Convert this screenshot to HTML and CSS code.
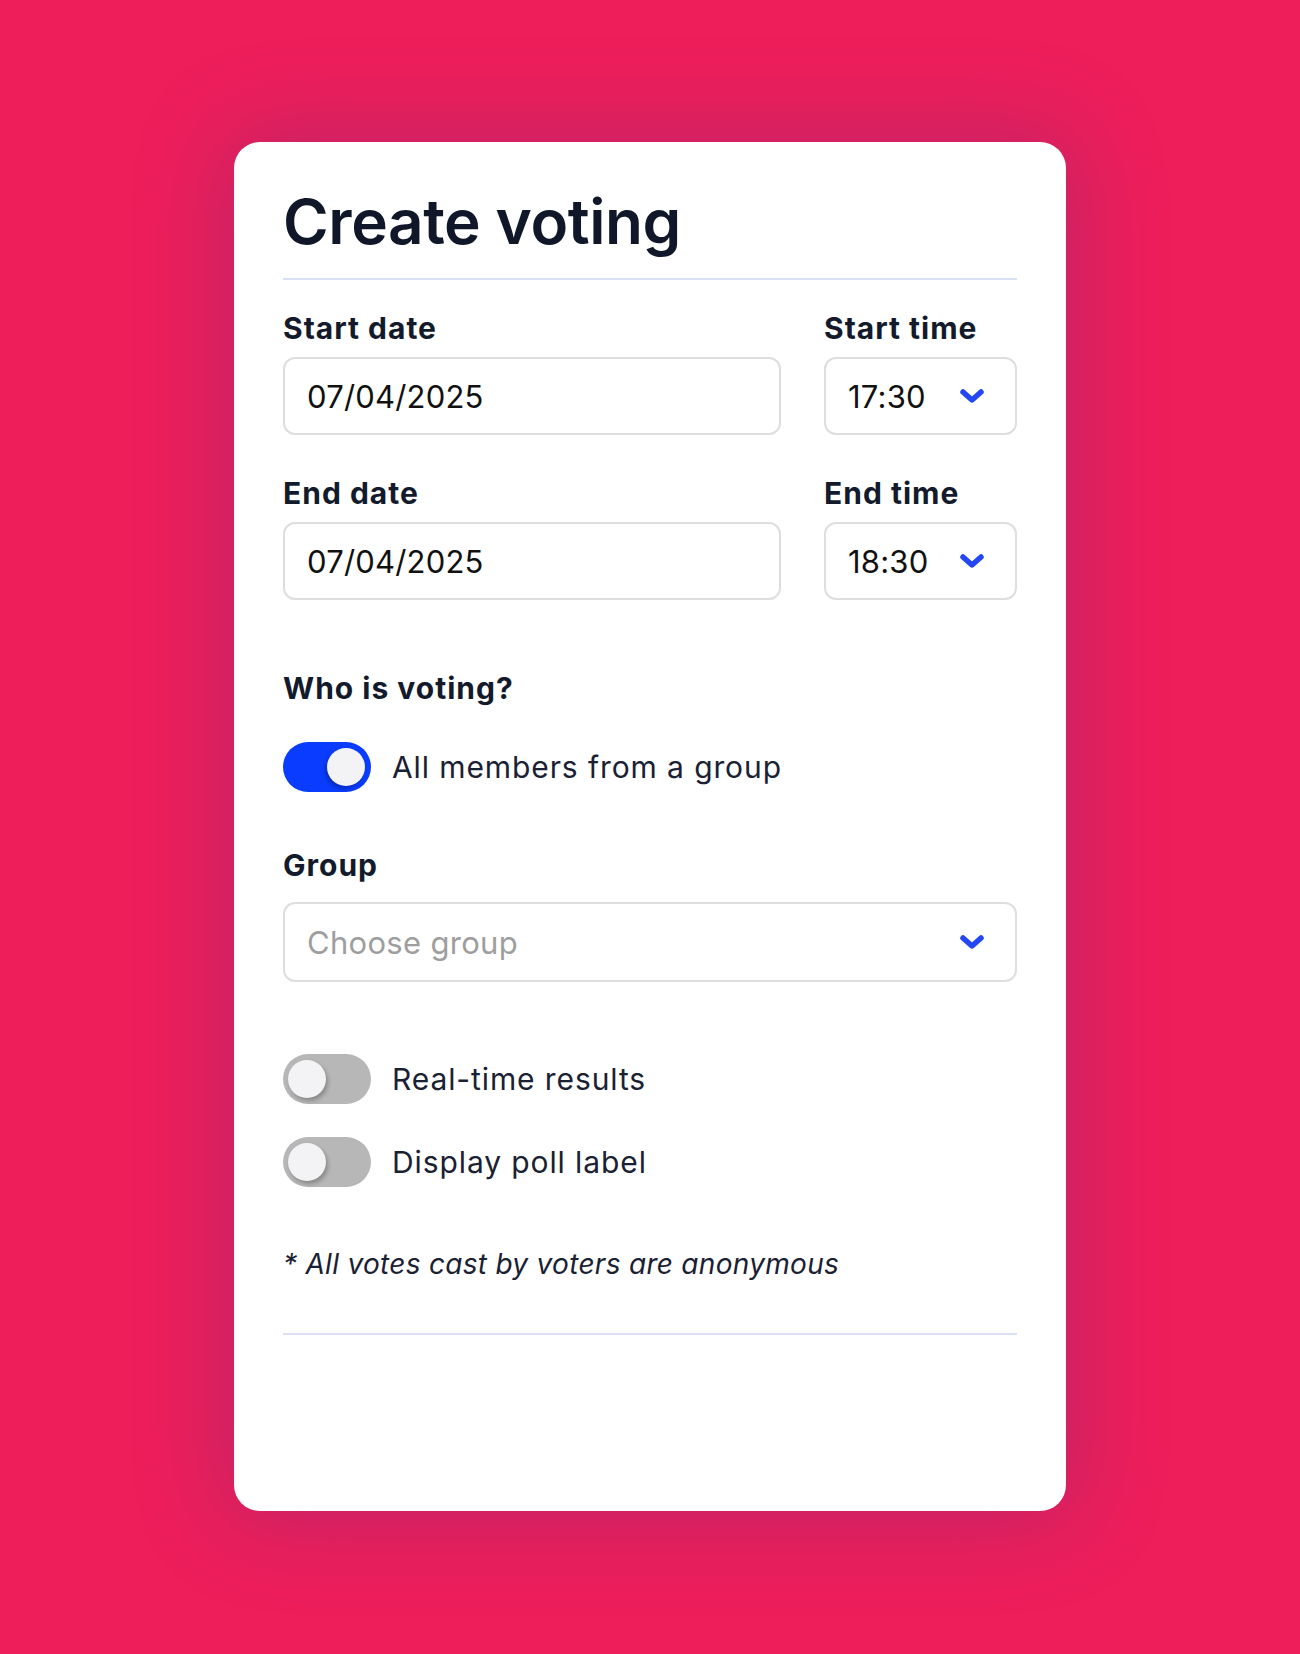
FILE: index.html
```html
<!DOCTYPE html>
<html lang="en">
<head>
    <meta charset="UTF-8">
    <title>Create voting</title>
    <link rel="stylesheet" href="styles.css">
</head>
<body>
    <div class="page">
        <div class="voting-card">
            <h1>Create voting</h1>
            <hr class="divider">

            <form id="voting-form">
                <!-- Fechas y horas -->
                <div class="date-row">
                    <div class="field">
                        <label for="start_date">Start date</label>
                        <input type="text" id="start_date" name="start_date" value="07/04/2025">
                    </div>
                    <div class="field">
                        <label>Start time</label>
                        <div class="select">
                            <span>17:30</span>
                            <svg class="chevron" width="26" height="16" viewBox="0 0 26 16"><path d="M4 4 L13 12 L22 4"/></svg>
                        </div>
                    </div>
                </div>

                <div class="date-row second">
                    <div class="field">
                        <label for="end_date">End date</label>
                        <input type="text" id="end_date" name="end_date" value="07/04/2025">
                    </div>
                    <div class="field">
                        <label>End time</label>
                        <div class="select">
                            <span>18:30</span>
                            <svg class="chevron" width="26" height="16" viewBox="0 0 26 16"><path d="M4 4 L13 12 L22 4"/></svg>
                        </div>
                    </div>
                </div>

                <!-- Votantes -->
                <h3 class="section-title">Who is voting?</h3>
                <div class="switch-row first">
                    <span class="switch on"><span class="knob"></span></span>
                    <span>All members from a group</span>
                </div>

                <label class="group-label">Group</label>
                <div class="select">
                    <span class="placeholder">Choose group</span>
                    <svg class="chevron" width="26" height="16" viewBox="0 0 26 16"><path d="M4 4 L13 12 L22 4"/></svg>
                </div>

                <!-- Opciones -->
                <div class="switch-row options">
                    <span class="switch"><span class="knob"></span></span>
                    <span>Real-time results</span>
                </div>
                <div class="switch-row">
                    <span class="switch"><span class="knob"></span></span>
                    <span>Display poll label</span>
                </div>

                <p class="note">* All votes cast by voters are anonymous</p>
            </form>

            <hr class="divider bottom">
        </div>
    </div>
</body>
</html>
```

FILE: styles.css
```css
body {
    font-family: 'Inter', 'Noto Sans', sans-serif;
    background-color: #ee1e5b;
    margin: 0;
    padding: 0;
    color: #121a2c;
}

.page {
    min-height: 1654px;
    display: flex;
    justify-content: center;
    align-items: flex-start;
    padding-top: 142px;
    box-sizing: border-box;
}

.voting-card {
    width: 832px;
    height: 1369px;
    box-sizing: border-box;
    background-color: #ffffff;
    border-radius: 26px;
    padding: 48px 49px 0;
    box-shadow: 0 0 90px 10px rgba(90, 50, 130, 0.3);
}

h1 {
    margin: 0;
    font-size: 62px;
    line-height: 64px;
    font-weight: 600;
    letter-spacing: -0.4px;
    color: #0f1729;
}

.divider {
    margin: 24px 0 0;
    border: none;
    height: 2px;
    background-color: #dae1f7;
}

.divider.bottom {
    margin-top: 53px;
}

form {
    display: flex;
    flex-direction: column;
}

.date-row {
    display: grid;
    grid-template-columns: minmax(0, 1fr) 193px;
    column-gap: 43px;
    margin-top: 32px;
}

.date-row.second {
    margin-top: 42px;
}

.field {
    display: flex;
    flex-direction: column;
    min-width: 0;
}

label, .section-title {
    display: block;
    font-size: 30px;
    line-height: 32px;
    font-weight: 700;
    letter-spacing: 1px;
    color: #121a2c;
    margin: 0 0 13px;
}

input, .select {
    width: 100%;
    min-width: 0;
    height: 78px;
    box-sizing: border-box;
    border: 2px solid #dedede;
    border-radius: 12px;
    padding: 0 30px 0 22px;
    font-family: inherit;
    font-size: 31px;
    letter-spacing: 0.2px;
    color: #111111;
    background-color: #ffffff;
}

.select {
    display: flex;
    align-items: center;
    justify-content: space-between;
}

.placeholder {
    color: #9e9e9e;
    letter-spacing: 0.3px;
}

.chevron path {
    fill: none;
    stroke: #2447f5;
    stroke-width: 5.5;
    stroke-linecap: round;
    stroke-linejoin: round;
}

.section-title {
    margin: 72px 0 0;
}

.group-label {
    margin: 57px 0 21px;
}

.group-label + .select {
    height: 80px;
}

.switch-row {
    display: flex;
    align-items: center;
    gap: 21px;
    margin-top: 33px;
    font-size: 30px;
    letter-spacing: 0.9px;
    color: #1a2133;
}

.switch-row.first {
    margin-top: 38px;
}

.switch-row.options {
    margin-top: 72px;
}

.switch {
    width: 88px;
    height: 50px;
    border-radius: 25px;
    background-color: #b7b7b7;
    display: flex;
    align-items: center;
    padding: 0 5px;
    box-sizing: border-box;
    flex-shrink: 0;
}

.switch.on {
    background-color: #0a3cff;
    justify-content: flex-end;
    padding: 0 6px;
}

.knob {
    width: 38px;
    height: 38px;
    border-radius: 50%;
    background-color: #f3f3f5;
    box-shadow: 2px 3px 4px rgba(0, 0, 0, 0.25);
}

.switch.on .knob {
    box-shadow: -2px 3px 4px rgba(0, 0, 0, 0.25);
}

.note {
    margin: 61px 0 0;
    font-size: 28px;
    line-height: 32px;
    font-style: italic;
    letter-spacing: 0.3px;
    color: #1a2133;
}
```
